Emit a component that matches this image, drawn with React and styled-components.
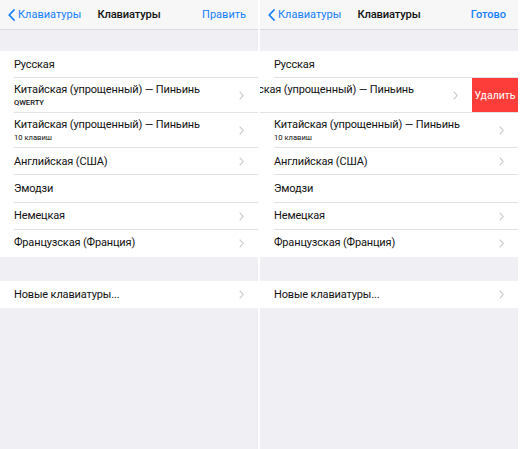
import React from "react";
import styled, { createGlobalStyle } from "styled-components";

const Global = createGlobalStyle`
  html, body { margin: 0; padding: 0; background: #fff; }
  body { font-family: Roboto, "Liberation Sans", sans-serif; -webkit-font-smoothing: antialiased; }
`;

const Screen = styled.div`
  display: flex;
  width: 520px;
  height: 449px;
  overflow: hidden;
  background: #fff;
`;

const Panel = styled.div`
  width: 258px;
  height: 449px;
  display: flex;
  flex-direction: column;
  background: #efeff4;
  overflow: hidden;
`;

const Gap = styled.div`
  width: ${(p) => p.$w}px;
  background: #fff;
  flex: none;
`;

const NavBar = styled.div`
  height: 29px;
  flex: none;
  display: grid;
  grid-template-columns: 1fr auto 1fr;
  align-items: center;
  background: #f7f7f7;
  border-bottom: 1px solid #dcdce0;
  padding: 0 12px 0 8px;
  font-size: 11px;
`;

const Back = styled.div`
  display: flex;
  align-items: center;
  gap: 3px;
  color: #157efb;
`;

const Title = styled.div`
  font-weight: 500;
  color: #111;
  font-size: 11.2px;
  letter-spacing: -0.15px;
  padding-left: 4px;
`;

const Action = styled.div`
  justify-self: end;
  color: #157efb;
  font-weight: ${(p) => (p.$bold ? 500 : 400)};
`;

const Spacer = styled.div`
  height: ${(p) => p.$h}px;
  flex: none;
`;

const Group = styled.div`
  background: #fff;
  flex: none;
`;

const Row = styled.div`
  position: relative;
  height: ${(p) => (p.$tall ? 35 : 27.2)}px;
  overflow: hidden;
`;

const RowContent = styled.div`
  position: relative;
  height: 100%;
  display: flex;
  align-items: center;
  padding: 0 14px;
  background: #fff;
  transform: translateX(${(p) => (p.$shift ? -p.$shift : 0)}px);
  &::after {
    content: "";
    display: ${(p) => (p.$last ? "none" : "block")};
    position: absolute;
    left: 14px;
    right: ${(p) => (p.$shift ? -p.$shift : 0)}px;
    bottom: 0;
    height: 1px;
    background: #e3e3e7;
  }
`;

const Texts = styled.div`
  flex: 1;
  display: flex;
  flex-direction: column;
  justify-content: center;
  min-width: 0;
  white-space: nowrap;
`;

const Label = styled.div`
  font-size: 11px;
  color: #111;
  line-height: 14px;
  letter-spacing: -0.15px;
`;

const Sub = styled.div`
  font-size: 7.6px;
  color: #111;
  line-height: 10px;
  margin-top: 1px;
  font-weight: ${(p) => (p.$bold ? 500 : 400)};
`;

const Delete = styled.div`
  position: absolute;
  right: 0;
  top: 0;
  bottom: 1px;
  width: 46px;
  background: #fc3d39;
  color: #fff;
  font-size: 10.5px;
  display: flex;
  align-items: center;
  justify-content: center;
`;

const Chevron = () => (
  <svg width="5" height="9" viewBox="0 0 5 9" style={{ flex: "none" }}>
    <path d="M0.7 0.7 L4.2 4.5 L0.7 8.3" fill="none" stroke="#c7c7cc" strokeWidth="1.1" />
  </svg>
);

const BackChevron = () => (
  <svg width="7" height="12" viewBox="0 0 7 12">
    <path d="M6 1 L1.2 6 L6 11" fill="none" stroke="#157efb" strokeWidth="1.8" strokeLinecap="round" strokeLinejoin="round" />
  </svg>
);

const items = [
  { label: "Русская" },
  { label: "Китайская (упрощенный) — Пиньинь", sub: "QWERTY", subBold: true, chev: true },
  { label: "Китайская (упрощенный) — Пиньинь", sub: "10 клавиш", chev: true },
  { label: "Английская (США)", chev: true },
  { label: "Эмодзи" },
  { label: "Немецкая", chev: true },
  { label: "Французская (Франция)", chev: true },
];

function ItemRow({ item, last, swiped }) {
  return (
    <Row $tall={!!item.sub}>
      {swiped && <Delete>Удалить</Delete>}
      <RowContent $last={last} $shift={swiped ? 46 : 0}>
        <Texts>
          <Label>{item.label}</Label>
          {item.sub && <Sub $bold={item.subBold}>{item.sub}</Sub>}
        </Texts>
        {item.chev && <Chevron />}
      </RowContent>
    </Row>
  );
}

function Screenshot({ action, bold, swipeIndex }) {
  return (
    <Panel>
      <NavBar>
        <Back>
          <BackChevron />
          <span>Клавиатуры</span>
        </Back>
        <Title>Клавиатуры</Title>
        <Action $bold={bold}>{action}</Action>
      </NavBar>
      <Spacer $h={21} />
      <Group>
        {items.map((it, i) => (
          <ItemRow key={i} item={it} last={i === items.length - 1} swiped={i === swipeIndex} />
        ))}
      </Group>
      <Spacer $h={24} />
      <Group>
        <ItemRow item={{ label: "Новые клавиатуры...", chev: true }} last />
      </Group>
    </Panel>
  );
}

export default function App() {
  return (
    <>
      <Global />
      <Screen>
        <Screenshot action="Править" />
        <Gap $w={2} />
        <Screenshot action="Готово" bold swipeIndex={1} />
        <Gap $w={2} />
      </Screen>
    </>
  );
}
